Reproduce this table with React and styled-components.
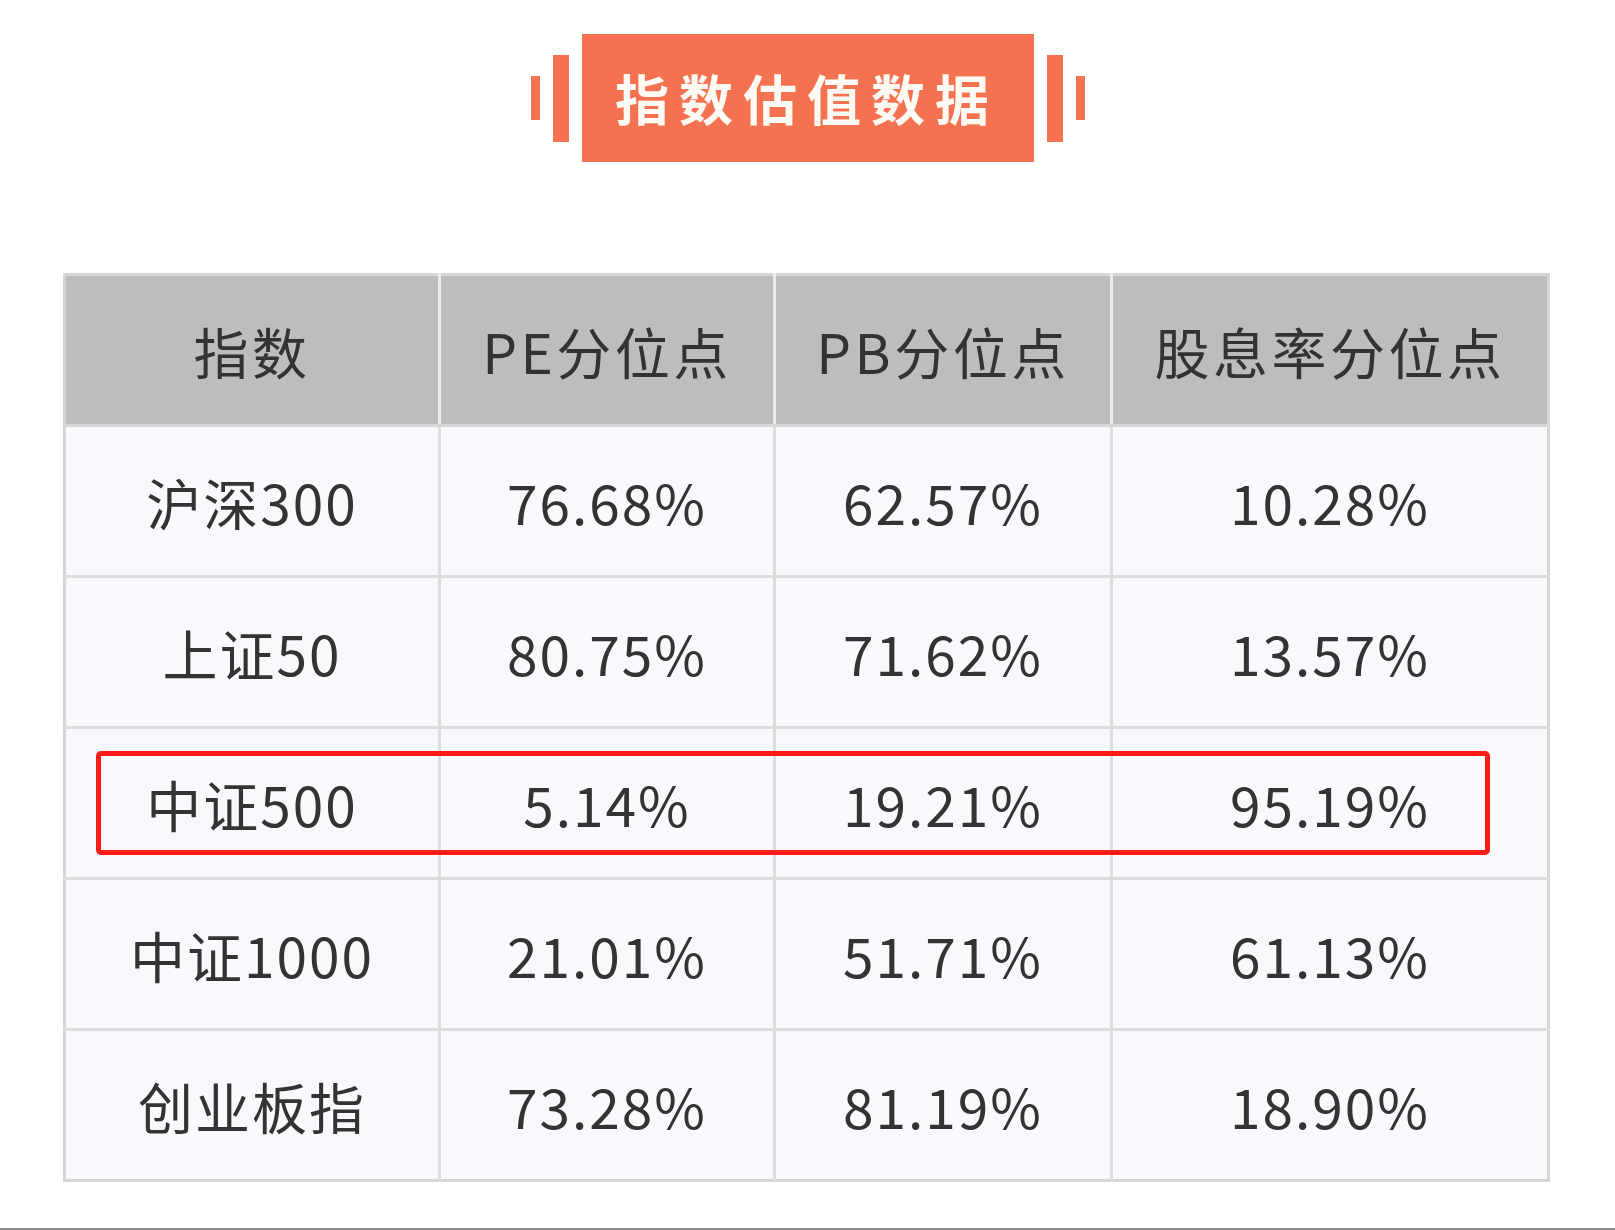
import React from "react";
import styled, { createGlobalStyle } from "styled-components";

const Global = createGlobalStyle`
  html, body { margin: 0; padding: 0; background: #ffffff; }
  body { font-family: "Noto Sans CJK SC", "Noto Sans", sans-serif; }
`;

const Page = styled.div`
  width: 1615px;
  height: 1230px;
  display: flex;
  flex-direction: column;
  background: #ffffff;
  overflow: hidden;
`;

const TitleRow = styled.div`
  margin-top: 34px;
  display: flex;
  align-items: center;
  justify-content: center;
  gap: 13px;
  padding-left: 1px;
`;

const Bar = styled.div`
  width: ${(p) => (p.$thick ? 16 : 9)}px;
  height: ${(p) => (p.$thick ? 87 : 44)}px;
  background: #f4724f;
`;

const Badge = styled.div`
  width: 452px;
  height: 128px;
  background: #f4724f;
  display: flex;
  align-items: center;
  justify-content: center;
  color: #fffaf3;
  font-family: "Noto Sans CJK SC", sans-serif;
  font-weight: 700;
  font-size: 54px;
  letter-spacing: 10px;
  padding-right: 2px;
  padding-bottom: 2px;
  box-sizing: border-box;
`;

const TableWrap = styled.div`
  position: relative;
  margin-top: 111px;
  margin-left: 63px;
  width: 1484px;
`;

const Table = styled.table`
  width: 1484px;
  border-collapse: collapse;
  table-layout: fixed;
  border: 3px solid #d6d6d6;
  font-family: "Noto Sans CJK SC", "Noto Sans", sans-serif;
  color: #333333;
`;

const HeadCell = styled.th`
  height: 148px;
  padding: 0;
  background: #bdbdbd;
  font-weight: 400;
  font-size: 55px;
  letter-spacing: 3.5px;
  text-align: center;
  border-left: 3px solid #ececec;
  border-bottom: 3px solid #d6d6d6;
  &:first-child { border-left: none; }
`;

const Cell = styled.td`
  height: 148px;
  padding: 0;
  background: #f7f9fc;
  font-size: 55px;
  letter-spacing: 2px;
  text-align: center;
  border-left: 3px solid #dcdcdc;
  border-top: 3px solid #dcdcdc;
  &:first-child { border-left: none; }
`;

const Highlight = styled.div`
  position: absolute;
  left: 33px;
  top: 478px;
  width: 1394px;
  height: 104px;
  box-sizing: border-box;
  border: 5px solid #ff1c17;
  border-radius: 5px;
  pointer-events: none;
`;

const Footer = styled.div`
  margin-top: auto;
  height: 2px;
  background: #8a8a8a;
`;

const headers = ["指数", "PE分位点", "PB分位点", "股息率分位点"];
const rows = [
  ["沪深300", "76.68%", "62.57%", "10.28%"],
  ["上证50", "80.75%", "71.62%", "13.57%"],
  ["中证500", "5.14%", "19.21%", "95.19%"],
  ["中证1000", "21.01%", "51.71%", "61.13%"],
  ["创业板指", "73.28%", "81.19%", "18.90%"],
];
const widths = [375, 335, 337, 437];

export default function App() {
  return (
    <>
      <Global />
      <Page>
        <TitleRow>
          <Bar />
          <Bar $thick />
          <Badge>指数估值数据</Badge>
          <Bar $thick />
          <Bar />
        </TitleRow>
        <TableWrap>
          <Table>
            <colgroup>
              {widths.map((w, i) => (
                <col key={i} style={{ width: w }} />
              ))}
            </colgroup>
            <thead>
              <tr>
                {headers.map((h) => (
                  <HeadCell key={h}>{h}</HeadCell>
                ))}
              </tr>
            </thead>
            <tbody>
              {rows.map((r) => (
                <tr key={r[0]}>
                  {r.map((c, i) => (
                    <Cell key={i}>{c}</Cell>
                  ))}
                </tr>
              ))}
            </tbody>
          </Table>
          <Highlight />
        </TableWrap>
        <Footer />
      </Page>
    </>
  );
}
